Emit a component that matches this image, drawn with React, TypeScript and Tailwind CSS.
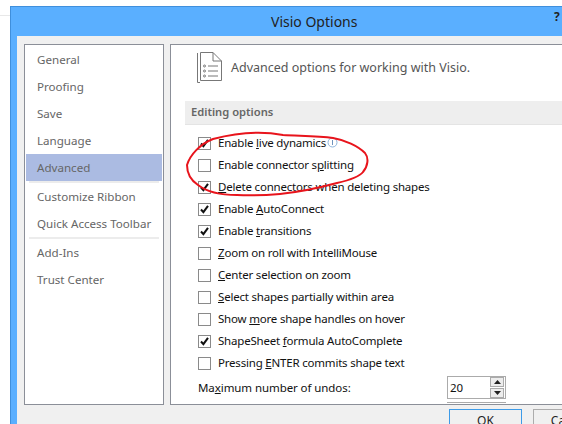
import type { ReactNode } from 'react'

const FONT = "font-['Noto_Sans','Open_Sans',sans-serif]"

const OPTIONS: { checked: boolean; label: ReactNode }[] = [
  { checked: true, label: <>Enable <u>l</u>ive dynamics</> },
  { checked: false, label: <>Enable connector s<u>p</u>litting</> },
  { checked: true, label: <><u>D</u>elete connectors when deleting shapes</> },
  { checked: true, label: <>Enable <u>A</u>utoConnect</> },
  { checked: true, label: <>Enable <u>t</u>ransitions</> },
  { checked: false, label: <><u>Z</u>oom on roll with IntelliMouse</> },
  { checked: false, label: <><u>C</u>enter selection on zoom</> },
  { checked: false, label: <><u>S</u>elect shapes partially within area</> },
  { checked: false, label: <>Show <u>m</u>ore shape handles on hover</> },
  { checked: true, label: <>ShapeSheet <u>f</u>ormula AutoComplete</> },
  { checked: false, label: <>Pressing <u>E</u>NTER commits shape text</> },
]

const NAV_GROUPS = [
  ['General', 'Proofing', 'Save', 'Language', 'Advanced'],
  ['Customize Ribbon', 'Quick Access Toolbar'],
  ['Add-Ins', 'Trust Center'],
]

const Checkbox = ({ checked }: { checked: boolean }) => (
  <div className="flex h-[13px] w-[13px] shrink-0 items-center justify-center border border-[#8a8a8a] bg-white">
    {checked && (
      <svg width="11" height="11" viewBox="0 0 11 11">
        <path d="M2 5.5 L4.4 8.2 L9 1.8" fill="none" stroke="#111" strokeWidth="2" />
      </svg>
    )}
  </div>
)

const DocIcon = () => (
  <svg width="26" height="32" viewBox="0 0 26 32" className="shrink-0" fill="none" stroke="#777" strokeWidth="1">
    <path d="M0.5 1 V30.5 H3" />
    <path d="M3.5 0.5 H16 L24.5 9 V28.5 H3.5 Z" />
    <path d="M16 0.5 V9 H24.5" />
    <circle cx="7.5" cy="14" r="1" />
    <circle cx="7.5" cy="19" r="1" />
    <circle cx="7.5" cy="24" r="1" />
    <path d="M11 14 H21 M11 19 H21 M11 24 H21" />
  </svg>
)

const SpinButton = ({ up }: { up: boolean }) => (
  <div className="flex h-[10px] w-[14px] items-center justify-center border border-[#ababab] bg-[#ededed]">
    <svg width="7" height="4" viewBox="0 0 7 4">
      <path d={up ? 'M3.5 0 L7 4 H0 Z' : 'M0 0 H7 L3.5 4 Z'} fill="#222" />
    </svg>
  </div>
)

const App = () => {
  return (
    <div className={`relative h-[424px] w-[562px] overflow-hidden bg-white pl-[10px] pt-[6px] ${FONT}`}>
      <div className="h-[430px] w-[620px] border border-[#3f8fdc] bg-[#5aafff] pl-[6px] pr-[6px]">
        {/* Заголовок окна */}
        <div className="flex h-[29px] items-center">
          <span className="ml-[254px] w-[283px] text-[14px] leading-none text-[#222]">Visio Options</span>
          <span className="mb-[9px] text-[12px] font-bold leading-none text-[#222]">?</span>
        </div>

        <div className="h-[400px] bg-[#f0f0f0] pl-[7px] pt-[8px]">
          <div className="flex h-[361px] gap-[6px]">
            {/* Левое меню */}
            <div className="flex w-[140px] shrink-0 flex-col border border-[#8b8f98] bg-white p-[1px]">
              {NAV_GROUPS.map((group, i) => (
                <div key={i} className={i > 0 ? 'mx-[3px] border-t-2 border-[#ececec]' : ''}>
                  {group.map((item) => (
                    <div
                      key={item}
                      className={`flex h-[27px] items-center text-[11.6px] text-[#666] ${
                        i > 0 ? 'pl-[8px]' : 'pl-[11px]'
                      } ${item === 'Advanced' ? 'bg-[#abbbe2]' : ''}`}
                    >
                      {item}
                    </div>
                  ))}
                </div>
              ))}
            </div>

            {/* Правая панель */}
            <div className="flex w-[420px] flex-col border border-[#8b8f98] bg-white pl-[14px]">
              <div className="flex h-[56px] items-start gap-[8px] pl-[12px] pt-[7px]">
                <DocIcon />
                <span className="mt-[7px] text-[12.5px] leading-[18px] text-[#555]">
                  Advanced options for working with Visio.
                </span>
              </div>

              <div className="flex h-[24px] items-center border-b border-[#e4e4e4] bg-[#eeeeee] pl-[6px] text-[11.2px] font-semibold text-[#666]">
                Editing options
              </div>

              <div className="flex flex-col pl-[13px] pt-[7px]">
                {OPTIONS.map((opt, i) => (
                  <div key={i} className="flex h-[22px] items-center gap-[7px] text-[11.5px] tracking-[-0.2px] text-[#111]">
                    <Checkbox checked={opt.checked} />
                    <span className="whitespace-nowrap">{opt.label}</span>
                    {i === 0 && (
                      <svg width="11" height="11" viewBox="0 0 11 11" className="-ml-[6px] mb-[2px]">
                        <circle cx="5.5" cy="5.5" r="4.5" fill="none" stroke="#8fb4dc" />
                        <path d="M5.5 3 V8" stroke="#6f93bd" />
                      </svg>
                    )}
                  </div>
                ))}

                <div className="mt-[2px] flex items-center text-[11.5px] tracking-[-0.08px] text-[#111]">
                  <span className="w-[249px] whitespace-nowrap">
                    Ma<u>x</u>imum number of undos:
                  </span>
                  <div className="flex h-[23px] w-[59px] items-center justify-between border border-[#ababab] pl-[2px] pr-[1px]">
                    <span>20</span>
                    <div className="flex flex-col gap-px">
                      <SpinButton up />
                      <SpinButton up={false} />
                    </div>
                  </div>
                </div>
                <div className="ml-[249px] mt-[3px] h-px w-[59px] bg-[#ababab]" />
              </div>
            </div>
          </div>

          {/* Кнопки */}
          <div className="flex gap-[11px] pl-[425px] pt-[4px]">
            <div className="flex h-[24px] w-[73px] items-center justify-center border border-[#3d9be8] bg-[#f0f0f0] text-[12px] text-[#222]">
              OK
            </div>
            <div className="flex h-[24px] w-[73px] items-center justify-center border border-[#acacac] bg-[#f0f0f0] text-[12px] text-[#222]">
              Cancel
            </div>
          </div>
        </div>
      </div>

      {/* Обводка от руки поверх скриншота */}
      <svg className="absolute left-0 top-0" width="562" height="424" viewBox="0 0 562 424" fill="none">
        <path
          d="M283 135 C262 131 236 133 213 139 C200 144 190 155 187 165 C187 174 192 181 198 185 C207 192 222 195 237 195 C255 196 268 195 280 194 C300 192 322 187 337 183 C350 180 360 176 363 172 C368 166 369 158 365 153 C358 146 345 140 333 138 C318 136 300 136 283 135 Z"
          stroke="#e8141c"
          strokeWidth="2"
        />
      </svg>
      <div className="absolute left-0 top-[15px] h-px w-[10px] bg-[#e8e8e8]" />
    </div>
  )
}

export default App
